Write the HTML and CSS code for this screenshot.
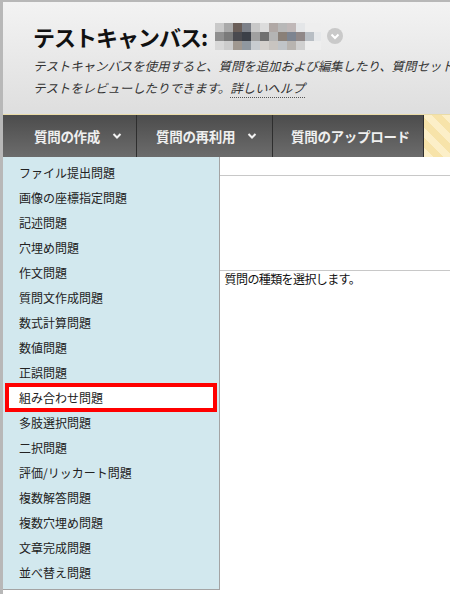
FILE: index.html
```html
<!DOCTYPE html>
<html lang="ja">
<head>
    <meta charset="UTF-8">
    <meta name="viewport" content="width=device-width, initial-scale=1.0">
    <title>テストキャンバス</title>
    <link rel="stylesheet" href="styles.css">
</head>
<body>
    <div class="marco">
        <div class="cabecalho">
            <h1 class="titulo">
                テストキャンバス:
                <span class="mosaico"></span>
                <span class="seta-circulo">
                    <svg width="16" height="16" viewBox="0 0 16 16"><polyline points="4.5,6.5 8,10 11.5,6.5" fill="none" stroke="#fff" stroke-width="2"/></svg>
                </span>
            </h1>
            <p class="descricao">
                <span class="linha">テストキャンバスを使用すると、質問を追加および編集したり、質問セットやランダムブロックを作成したり、</span>
                <span class="linha">テストをレビューしたりできます。<a class="ajuda" href="#">詳しいヘルプ</a></span>
            </p>
        </div>

        <div class="barra">
            <div class="botao botao-criar">質問の作成
                <svg width="10" height="8" viewBox="0 0 10 8"><polyline points="1.5,2 5,5.5 8.5,2" fill="none" stroke="#f2f2f2" stroke-width="2"/></svg>
            </div>
            <div class="botao botao-reusar">質問の再利用
                <svg width="10" height="8" viewBox="0 0 10 8"><polyline points="1.5,2 5,5.5 8.5,2" fill="none" stroke="#f2f2f2" stroke-width="2"/></svg>
            </div>
            <div class="botao botao-enviar">質問のアップロード</div>
            <div class="listras"></div>
        </div>

        <div class="conteudo">
            <div class="faixa"></div>
            <div class="area"></div>
            <p class="instrucao">「質問の作成」をポイントし、質問の種類を選択します。</p>
        </div>

        <ul class="menu">
            <li>ファイル提出問題</li>
            <li>画像の座標指定問題</li>
            <li>記述問題</li>
            <li>穴埋め問題</li>
            <li>作文問題</li>
            <li>質問文作成問題</li>
            <li>数式計算問題</li>
            <li>数値問題</li>
            <li>正誤問題</li>
            <li class="marcado">組み合わせ問題</li>
            <li>多肢選択問題</li>
            <li>二択問題</li>
            <li>評価/リッカート問題</li>
            <li>複数解答問題</li>
            <li>複数穴埋め問題</li>
            <li>文章完成問題</li>
            <li>並べ替え問題</li>
        </ul>
    </div>
</body>
</html>
```

FILE: styles.css
```css
* {
    margin: 0;
    padding: 0;
    box-sizing: border-box;
}
body {
    width: 450px;
    height: 594px;
    overflow: hidden;
    background-color: white;
    font-family: "Noto Sans CJK JP", "Liberation Sans", sans-serif;
    color: #222;
}
.marco {
    position: relative;
    height: 594px;
    border-top: 2px solid #b8b8b8;
    border-left: 3px solid #b8b8b8;
}
.cabecalho {
    height: 112px;
    padding: 19px 0 0 30px;
    background-image: linear-gradient(#f3f3f3, #dedede);
    overflow: hidden;
}
.titulo {
    display: flex;
    align-items: center;
    height: 30px;
    font-size: 22px;
    font-weight: bold;
    color: #111;
    letter-spacing: -1px;
    white-space: nowrap;
}
.mosaico {
    display: inline-block;
    width: 106px;
    height: 27px;
    margin-left: 8px;
    background-repeat: no-repeat;
    background-size: 108px 9px;
    background-position: 0 0, 0 9px, 0 18px;
    background-image:
        linear-gradient(to right, #c9c9c9 0 9px, #a9a9a9 9px 18px, #6a5e58 18px 27px, #7c8088 27px 36px, #c8c8c8 36px 45px, #dcdcdc 45px 54px, #b0a8a5 54px 63px, #b8b8b8 63px 72px, #c0b8b8 72px 81px, #e4e6e8 81px 90px, #eeeeee 90px 108px),
        linear-gradient(to right, #8f8f8f 0 9px, #7a7a7a 9px 18px, #4a4a4f 18px 27px, #3c4048 27px 36px, #a0a0a0 36px 45px, #707070 45px 54px, #b4b4b4 54px 63px, #8a8078 63px 72px, #7d8490 72px 81px, #908888 81px 90px, #b8bec4 90px 99px, #e6e8ea 99px 108px),
        linear-gradient(to right, #d8d8d8 0 9px, #cccccc 9px 18px, #a09890 18px 27px, #9098a0 27px 36px, #c8ccd0 36px 45px, #d4d0cc 45px 54px, #c8c4c0 54px 63px, #c0c4c8 63px 72px, #b8b4b0 72px 81px, #d0d0d0 81px 90px, #eeeeee 90px 108px);
}
.seta-circulo {
    display: inline-flex;
    width: 16px;
    height: 16px;
    margin-left: 6px;
    border-radius: 50%;
    background-color: #c9c9c9;
}
.descricao {
    margin-top: 4px;
    font-size: 12.5px;
    font-style: italic;
    line-height: 22px;
    color: #333;
    letter-spacing: -0.1px;
}
.linha {
    display: block;
    white-space: nowrap;
}
.ajuda {
    color: #333;
    text-decoration: none;
    border-bottom: 1px dotted #555;
}
.barra {
    display: flex;
    height: 43px;
    border-top: 1px solid #eadca8;
    background-image: linear-gradient(#4c4c4c, #6c6c6c);
}
.botao {
    display: flex;
    align-items: center;
    gap: 12px;
    height: 100%;
    font-size: 13.5px;
    font-weight: bold;
    color: #efefef;
    border-right: 1px solid #2e2e2e;
    letter-spacing: -0.3px;
    white-space: nowrap;
}
.botao-criar {
    width: 134px;
    padding-left: 31px;
}
.botao-reusar {
    width: 136px;
    padding-left: 19px;
}
.botao-enviar {
    width: 151px;
    padding-left: 18px;
}
.listras {
    flex: 1;
    background-image: repeating-linear-gradient(45deg, #fcefc8 0 7px, #f7e3a9 7px 14px);
}
.conteudo {
    font-size: 12px;
}
.faixa {
    height: 19px;
    border-bottom: 1px solid #c8c8c8;
}
.area {
    height: 95px;
    border-bottom: 1px solid #c8c8c8;
}
.instrucao {
    padding-left: 62px;
    line-height: 16px;
    letter-spacing: -0.6px;
    color: #111;
    white-space: nowrap;
}
.menu {
    position: absolute;
    left: 0;
    top: 155px;
    width: 217px;
    height: 433px;
    padding: 3px 0 4px;
    list-style: none;
    background-color: #d2e8ee;
    border-right: 1px solid #a4a4a4;
    border-bottom: 1px solid #a4a4a4;
}
.menu li {
    height: 25px;
    line-height: 25px;
    padding-left: 16px;
    font-size: 12px;
    color: #222;
    white-space: nowrap;
}
.menu li.marcado {
    position: relative;
    height: 29px;
    line-height: 21px;
    margin: -2px 2px;
    padding-left: 10px;
    background-color: white;
    border: 4px solid #ff0000;
}
```
